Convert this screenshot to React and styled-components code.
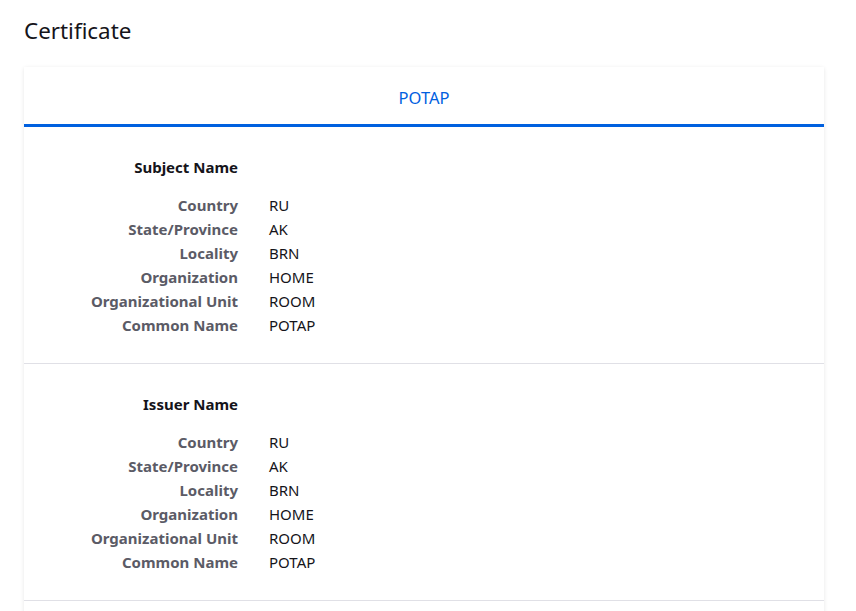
import React from "react";
import styled, { createGlobalStyle } from "styled-components";

const Global = createGlobalStyle`
  html, body { margin: 0; padding: 0; background: #ffffff; }
  body { font-family: "Noto Sans", "Open Sans", sans-serif; color: #15141a; }
`;

const Page = styled.div`
  padding: 16px 32px 0 24px;
`;

const Title = styled.h1`
  margin: 0 0 21px;
  font-size: 22.4px;
  line-height: 30px;
  font-weight: 400;
  color: #15141a;
`;

const Card = styled.div`
  background: #fff;
  box-shadow: 0 1px 4px rgba(12, 12, 13, 0.1);
`;

const Tabs = styled.div`
  display: flex;
  justify-content: center;
`;

const Tab = styled.div`
  height: 60px;
  flex: 1;
  display: flex;
  align-items: center;
  justify-content: center;
  padding-top: 3px;
  box-sizing: border-box;
  font-size: 16.5px;
  color: ${(p) => (p.$active ? "#0060df" : "#15141a")};
  border-bottom: 3px solid ${(p) => (p.$active ? "#0060df" : "transparent")};
`;

const Section = styled.section`
  padding: 28px 0 26px;
  border-bottom: 1px solid #e0e0e6;
`;

const Grid = styled.div`
  display: grid;
  grid-template-columns: 214px auto;
  column-gap: 31px;
  font-size: 15px;
  line-height: 24px;
`;

const Heading = styled.div`
  grid-column: 1;
  text-align: right;
  font-weight: 700;
  color: #15141a;
  margin-bottom: 14px;
`;

const Label = styled.div`
  text-align: right;
  font-weight: 700;
  color: #5b5b66;
`;

const Value = styled.div`
  color: #15141a;
`;

const fields = [
  ["Country", "RU"],
  ["State/Province", "AK"],
  ["Locality", "BRN"],
  ["Organization", "HOME"],
  ["Organizational Unit", "ROOM"],
  ["Common Name", "POTAP"],
];

function InfoSection({ title }) {
  return (
    <Section>
      <Grid>
        <Heading>{title}</Heading>
        <div />
        {fields.map(([k, v]) => (
          <React.Fragment key={k}>
            <Label>{k}</Label>
            <Value>{v}</Value>
          </React.Fragment>
        ))}
      </Grid>
    </Section>
  );
}

export default function App() {
  return (
    <>
      <Global />
      <Page>
        <Title>Certificate</Title>
        <Card>
          <Tabs>
            <Tab $active>POTAP</Tab>
          </Tabs>
          <InfoSection title="Subject Name" />
          <InfoSection title="Issuer Name" />
          <Section />
        </Card>
      </Page>
    </>
  );
}
